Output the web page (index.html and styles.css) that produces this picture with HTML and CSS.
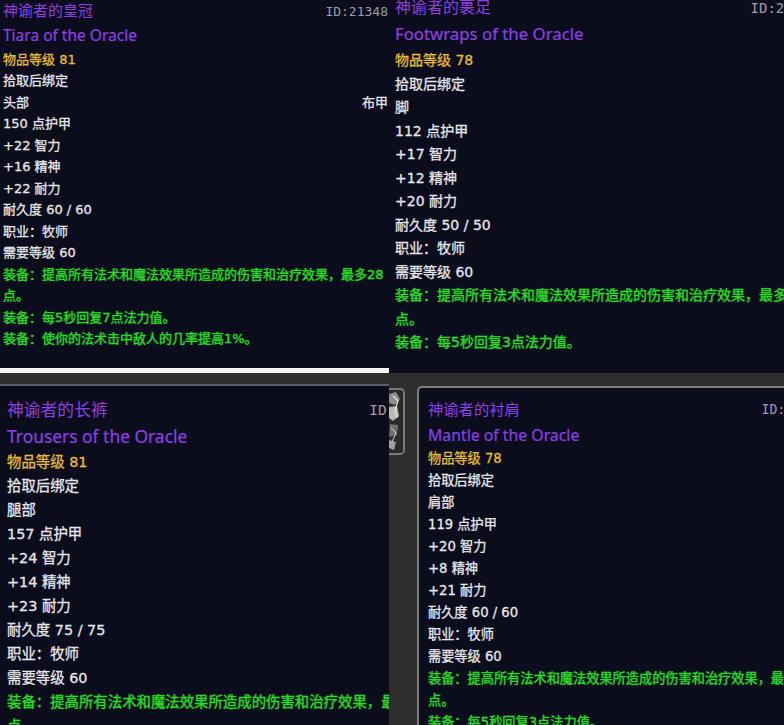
FILE: index.html
```html
<!DOCTYPE html>
<html lang="zh-CN">
<head>
    <meta charset="UTF-8">
    <meta name="viewport" content="width=device-width, initial-scale=1.0">
    <title>神谕者套装</title>
    <link rel="stylesheet" href="styles.css">
</head>
<body>
    <div class="collage">
        <div class="row row-top">
            <!-- Tiara -->
            <div class="tip tip-tl">
                <div class="tip-body">
                    <div class="line head"><span class="name-cn">神谕者的皇冠</span><span class="item-id">ID:21348</span></div>
                    <div class="line name-en">Tiara of the Oracle</div>
                    <div class="line ilvl">物品等级 81</div>
                    <div class="line">拾取后绑定</div>
                    <div class="line split"><span>头部</span><span>布甲</span></div>
                    <div class="line">150 点护甲</div>
                    <div class="line">+22 智力</div>
                    <div class="line">+16 精神</div>
                    <div class="line">+22 耐力</div>
                    <div class="line">耐久度 60 / 60</div>
                    <div class="line">职业：牧师</div>
                    <div class="line">需要等级 60</div>
                    <div class="line equip">装备：提高所有法术和魔法效果所造成的伤害和治疗效果，最多28</div>
                    <div class="line equip">点。</div>
                    <div class="line equip">装备：每5秒回复7点法力值。</div>
                    <div class="line equip">装备：使你的法术击中敌人的几率提高1%。</div>
                </div>
            </div>

            <!-- Footwraps -->
            <div class="tip tip-tr">
                <div class="tip-body">
                    <div class="line head"><span class="name-cn">神谕者的裹足</span><span class="item-id">ID:21349</span></div>
                    <div class="line name-en">Footwraps of the Oracle</div>
                    <div class="line ilvl">物品等级 78</div>
                    <div class="line">拾取后绑定</div>
                    <div class="line">脚</div>
                    <div class="line">112 点护甲</div>
                    <div class="line">+17 智力</div>
                    <div class="line">+12 精神</div>
                    <div class="line">+20 耐力</div>
                    <div class="line">耐久度 50 / 50</div>
                    <div class="line">职业：牧师</div>
                    <div class="line">需要等级 60</div>
                    <div class="line equip">装备：提高所有法术和魔法效果所造成的伤害和治疗效果，最多20</div>
                    <div class="line equip">点。</div>
                    <div class="line equip">装备：每5秒回复3点法力值。</div>
                </div>
            </div>
        </div>

        <div class="row row-bottom">
            <!-- Trousers -->
            <div class="tip tip-bl">
                <div class="tip-body">
                    <div class="line head"><span class="name-cn">神谕者的长裤</span><span class="item-id">ID:21350</span></div>
                    <div class="line name-en">Trousers of the Oracle</div>
                    <div class="line ilvl">物品等级 81</div>
                    <div class="line">拾取后绑定</div>
                    <div class="line">腿部</div>
                    <div class="line">157 点护甲</div>
                    <div class="line">+24 智力</div>
                    <div class="line">+14 精神</div>
                    <div class="line">+23 耐力</div>
                    <div class="line">耐久度 75 / 75</div>
                    <div class="line">职业：牧师</div>
                    <div class="line">需要等级 60</div>
                    <div class="line equip">装备：提高所有法术和魔法效果所造成的伤害和治疗效果，最多26</div>
                    <div class="line equip">点。</div>
                </div>
            </div>

            <div class="slot">
                <div class="slot-icon">
                    <svg width="14" height="65" viewBox="0 0 14 65">
                        <rect x="0" y="0" width="14" height="65" fill="#2b2b2b"/>
                        <path d="M0 4 L7 2 L11 9 L6 15 L0 13 Z" fill="#8d8d88"/>
                        <path d="M0 17 L8 16 L10 26 L4 31 L0 28 Z" fill="#b9b9b3"/>
                        <path d="M1 34 L9 35 L8 45 L0 47 Z" fill="#6f6f6b"/>
                        <path d="M0 50 L7 52 L5 60 L0 58 Z" fill="#a2a29c"/>
                        <path d="M4 6 L9 11 L6 21 L8 28" stroke="#e6e6e0" stroke-width="1.2" fill="none"/>
                        <path d="M2 38 L7 43 L3 52" stroke="#d4d4ce" stroke-width="1" fill="none"/>
                    </svg>
                </div>
            </div>

            <!-- Mantle -->
            <div class="tip tip-br">
                <div class="tip-body">
                    <div class="line head"><span class="name-cn">神谕者的衬肩</span><span class="item-id">ID:21351</span></div>
                    <div class="line name-en">Mantle of the Oracle</div>
                    <div class="line ilvl">物品等级 78</div>
                    <div class="line">拾取后绑定</div>
                    <div class="line">肩部</div>
                    <div class="line">119 点护甲</div>
                    <div class="line">+20 智力</div>
                    <div class="line">+8 精神</div>
                    <div class="line">+21 耐力</div>
                    <div class="line">耐久度 60 / 60</div>
                    <div class="line">职业：牧师</div>
                    <div class="line">需要等级 60</div>
                    <div class="line equip">装备：提高所有法术和魔法效果所造成的伤害和治疗效果，最多20</div>
                    <div class="line equip">点。</div>
                    <div class="line equip">装备：每5秒回复3点法力值。</div>
                </div>
            </div>
        </div>
    </div>
</body>
</html>
```

FILE: styles.css
```css
/* Tooltip collage */
body {
    margin: 0;
    padding: 0;
    background-color: #2f2e2c;
    font-family: "DejaVu Sans", "Noto Sans CJK SC", sans-serif;
    color: #e6e6ea;
    overflow: hidden;
}

.collage {
    width: 784px;
    height: 725px;
    overflow: hidden;
}

.row {
    display: flex;
    align-items: flex-start;
}

.row-top {
    height: 373px;
}

.row-bottom {
    margin-top: 11px;
}

/* tooltip panel */
.tip {
    background-color: #0b0d1d;
    overflow: hidden;
    box-sizing: border-box;
}

.tip-body {
    box-sizing: border-box;
}

.line {
    white-space: nowrap;
    font-size: var(--fs);
    line-height: var(--lh);
    -webkit-text-stroke: 0.3px currentColor;
}

.head {
    display: flex;
    justify-content: space-between;
    align-items: center;
    font-size: var(--title-fs);
    line-height: var(--title-lh);
    -webkit-text-stroke: 0;
}

.name-cn,
.name-en {
    color: #8d40e4;
}

.name-en {
    font-family: "Noto Sans", sans-serif;
    font-size: var(--en-fs);
    line-height: var(--en-lh);
    -webkit-text-stroke: 0.2px currentColor;
}

.item-id {
    font-family: "DejaVu Sans Mono", monospace;
    font-size: var(--id-fs);
    color: #9b9bab;
}

.ilvl {
    color: #e5be3a;
}

.split {
    display: flex;
    justify-content: space-between;
}

.equip {
    color: #2fd82a;
    text-shadow: 0 0 2px rgba(40, 220, 30, 0.45);
}

/* top left: Tiara */
.tip-tl {
    width: 389px;
    height: 373px;
    border-bottom: 5px solid #f2f2f2;
    --fs: 13px;
    --lh: 21.5px;
    --title-fs: 15px;
    --title-lh: 23px;
    --en-fs: 15.5px;
    --en-lh: 25.5px;
    --id-fs: 13px;
}

.tip-tl .tip-body {
    width: 389px;
    padding: 0 1px 0 3px;
}

/* top right: Footwraps */
.tip-tr {
    flex: 1;
    height: 373px;
    --fs: 14px;
    --lh: 23.5px;
    --title-fs: 16px;
    --title-lh: 22px;
    --en-fs: 16.8px;
    --en-lh: 30px;
    --id-fs: 14px;
}

.tip-tr .tip-body {
    width: 429px;
    margin-top: -3px;
    padding-left: 6px;
}

/* bottom left: Trousers */
.tip-bl {
    width: 389px;
    height: 341px;
    border-top: 2px solid #5c5c66;
    --fs: 14.4px;
    --lh: 24px;
    --title-fs: 16.8px;
    --title-lh: 24px;
    --en-fs: 17.4px;
    --en-lh: 28px;
    --id-fs: 14.5px;
}

.tip-bl .tip-body {
    width: 439px;
    padding: 12px 0 0 7px;
}

/* item icon peeking out between panels */
.slot {
    width: 28px;
    flex-shrink: 0;
}

.slot-icon {
    width: 16px;
    height: 67px;
    margin-top: 4px;
    border: 2px solid #7a7a78;
    border-left: none;
    border-radius: 0 5px 5px 0;
    box-sizing: border-box;
    overflow: hidden;
    background-color: #2b2b2b;
}

.slot-icon svg {
    display: block;
}

/* bottom right: Mantle */
.tip-br {
    flex: 1;
    height: 339px;
    margin-top: 2px;
    border-top: 2px solid #7d7d7d;
    border-left: 2px solid #7d7d7d;
    border-radius: 5px 0 0 0;
    --fs: 13.2px;
    --lh: 22px;
    --title-fs: 15.3px;
    --title-lh: 24px;
    --en-fs: 15.8px;
    --en-lh: 26px;
    --id-fs: 13.2px;
}

.tip-br .tip-body {
    width: 406px;
    padding: 10px 0 0 9px;
}
```
